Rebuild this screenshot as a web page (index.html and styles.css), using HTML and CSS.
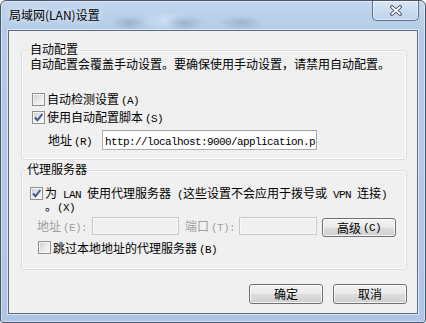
FILE: index.html
```html
<!DOCTYPE html>
<html lang="zh-CN">
<head>
<meta charset="utf-8">
<title>局域网(LAN)设置</title>
<link rel="stylesheet" href="styles.css">
</head>
<body>
<div class="window">
  <div class="titlebar">
    <span class="title">局域网(LAN)设置</span>
    <div class="close">
      <svg width="14" height="11" viewBox="0 0 14 11">
        <path d="M3 2 L11 9 M11 2 L3 9" stroke="#3b4659" stroke-width="3.6" stroke-linecap="round" fill="none"/>
        <path d="M3 2 L11 9 M11 2 L3 9" stroke="#ffffff" stroke-width="1.7" stroke-linecap="round" fill="none"/>
      </svg>
    </div>
  </div>
  <div class="client">
    <fieldset class="group g1">
      <legend>自动配置</legend>
      <p class="desc">自动配置会覆盖手动设置。要确保使用手动设置，请禁用自动配置。</p>
      <label class="check c1"><span class="box"></span><span class="ctext">自动检测设置<span class="lat key">(A)</span></span></label>
      <label class="check c2"><span class="box"><svg width="11" height="11" viewBox="0 0 11 11"><path d="M2 5.5 L4.5 8.3 L9.3 2" stroke="#40568a" stroke-width="2" fill="none"/></svg></span><span class="ctext">使用自动配置脚本<span class="lat key">(S)</span></span></label>
      <div class="addr-row">
        <span class="lbl">地址<span class="lat key">(R)</span></span>
        <div class="field url"><span class="lat">http://localhost:9000/application.p</span></div>
      </div>
    </fieldset>
    <fieldset class="group g2">
      <legend>代理服务器</legend>
      <label class="check c3"><span class="box"><svg width="11" height="11" viewBox="0 0 11 11"><path d="M2 5.5 L4.5 8.3 L9.3 2" stroke="#40568a" stroke-width="2" fill="none"/></svg></span><span class="ctext">为<span class="lat"> LAN </span>使用代理服务器<span class="lat"> (</span>这些设置不会应用于拨号或<span class="lat"> VPN </span>连接<span class="lat">)</span><br>。<span class="lat">(X)</span></span></label>
      <div class="proxy-row">
        <span class="dis lbl-e">地址<span class="lat key">(E):</span></span>
        <div class="field off f-addr"></div>
        <span class="dis lbl-t">端口<span class="lat key">(T):</span></span>
        <div class="field off f-port"></div>
        <div class="btn adv">高级<span class="lat key">(C)</span></div>
      </div>
      <label class="check c4"><span class="box"></span><span class="ctext">跳过本地地址的代理服务器<span class="lat key">(B)</span></span></label>
    </fieldset>
    <div class="footer">
      <div class="btn">确定</div>
      <div class="btn">取消</div>
    </div>
  </div>
</div>
</body>
</html>
```

FILE: styles.css
```css
* { box-sizing: border-box; }
html, body { margin: 0; padding: 0; background: #ffffff; }
body {
  font-family: "Noto Sans CJK SC", "Noto Sans", sans-serif;
  font-size: 12px;
  color: #000;
}
.window {
  width: 426px;
  height: 323px;
  border: 1px solid #4b5766;
  border-radius: 6px 6px 3px 3px;
  background:
    radial-gradient(ellipse 18px 8px at 128px 22px, rgba(120,140,170,0.45), transparent),
    radial-gradient(ellipse 20px 8px at 183px 22px, rgba(120,140,170,0.45), transparent),
    radial-gradient(ellipse 22px 8px at 240px 22px, rgba(120,140,170,0.40), transparent),
    radial-gradient(ellipse 25px 10px at 165px 20px, rgba(220,235,250,0.6), transparent),
    linear-gradient(#c2d6ee 0px, #b4cbe7 30px, #aec6e5 100%);
  box-shadow: inset 0 0 0 1px rgba(255,255,255,0.45);
  overflow: hidden;
}
.titlebar {
  height: 29px;
  display: flex;
  justify-content: space-between;
  align-items: flex-start;
  padding-left: 8px;
}
.title {
  margin-top: 6px;
  line-height: 16px;
  font-size: 12px;
  color: #000;
  text-shadow: 0 0 6px rgba(255,255,255,0.9);
}
.close {
  width: 47px;
  height: 20px;
  margin-right: 6px;
  border: 1px solid #5f6f86;
  border-top: none;
  border-radius: 0 0 5px 5px;
  background: linear-gradient(rgba(235,242,250,0.55), rgba(200,215,235,0.35));
  box-shadow: inset 0 0 0 1px rgba(255,255,255,0.5);
  display: flex;
  align-items: center;
  justify-content: center;
}
.client {
  margin: 0 7px;
  height: 284px;
  border: 1px solid #5d6c7e;
  background: #f0f0f0;
  box-shadow: 0 0 0 1px rgba(255,255,255,0.55);
  padding: 0 10px 0 12px;
  display: flex;
  flex-direction: column;
}
.group {
  margin: 0;
  min-width: 0;
  border: 1px solid #d5dfe5;
  border-radius: 3px;
  box-shadow: inset 0 0 0 1px rgba(255,255,255,0.7);
  padding: 0 8px;
  display: flex;
  flex-direction: column;
  align-items: flex-start;
}
.group legend {
  padding: 0 1px 3px 1px;
  line-height: 13px;
  font-size: 12px;
}
.g1 { margin-top: 11px; padding-bottom: 9px; }
.g1 legend { margin-left: -1px; }
.g2 { margin-top: 2px; padding-bottom: 14px; }
.g2 legend { margin-left: -4px; }
.lat {
  font-family: "Liberation Mono", "DejaVu Sans Mono", monospace;
  font-size: 11px;
  letter-spacing: -0.6px;
  line-height: 0;
}
.key { margin-left: 2px; }
.desc {
  margin: 0;
  line-height: 12px;
}
.check {
  display: flex;
  align-items: flex-start;
  line-height: 16px;
}
.ctext { display: block; }
.box {
  width: 13px;
  height: 13px;
  flex: none;
  border: 1px solid #8f8f8f;
  background: linear-gradient(135deg, #c9cdd3 0%, #e9eaec 55%, #fbfbfb 100%);
  box-shadow: inset 0 0 0 1px #f5f5f5;
  display: flex;
  align-items: center;
  justify-content: center;
  margin-top: 2px;
  margin-right: 2px;
}
.c1 { margin-top: 21px; margin-left: 2px; }
.c2 { margin-top: 2px; margin-left: 2px; }
.addr-row {
  margin-top: 5px;
  height: 20px;
  display: flex;
  align-items: center;
}
.lbl { margin-left: 18px; width: 54px; line-height: 16px; }
.field {
  height: 20px;
  border: 1px solid #abadb3;
  border-top-color: #a0a3aa;
  background: #fff;
  padding-left: 2px;
  line-height: 18px;
  white-space: nowrap;
  overflow: hidden;
}
.url { width: 215px; }
.c3 { margin-top: 8px; line-height: 13px; }
.c3 .box { margin-top: 1px; }
.proxy-row {
  margin-top: 5px;
  display: flex;
  align-items: flex-start;
}
.dis { color: #a0a0a0; line-height: 18px; }
.lbl-e { margin-left: 7px; width: 55px; }
.lbl-t { margin-left: 6px; width: 54px; }
.field.off {
  height: 18px;
  background: #f0f0f0;
  border: 1px solid #c5c8cc;
  box-shadow: inset 0 0 0 1px rgba(255,255,255,0.6);
}
.f-addr { width: 87px; }
.f-port { width: 78px; }
.btn {
  width: 74px;
  height: 20px;
  border: 1px solid #707070;
  border-radius: 3px;
  background: linear-gradient(#f2f2f2 0%, #ebebeb 48%, #dddddd 52%, #cfcfcf 100%);
  box-shadow: inset 0 0 0 1px rgba(252,252,252,0.8);
  display: flex;
  align-items: center;
  justify-content: center;
  line-height: 16px;
}
.adv { margin-left: 5px; margin-top: 1px; height: 19px; }
.c4 { margin-top: 3px; margin-left: 8px; line-height: 15px; }
.c4 .box { margin-top: 1px; }
.footer {
  margin-top: 14px;
  display: flex;
  justify-content: flex-end;
  gap: 10px;
}
```
